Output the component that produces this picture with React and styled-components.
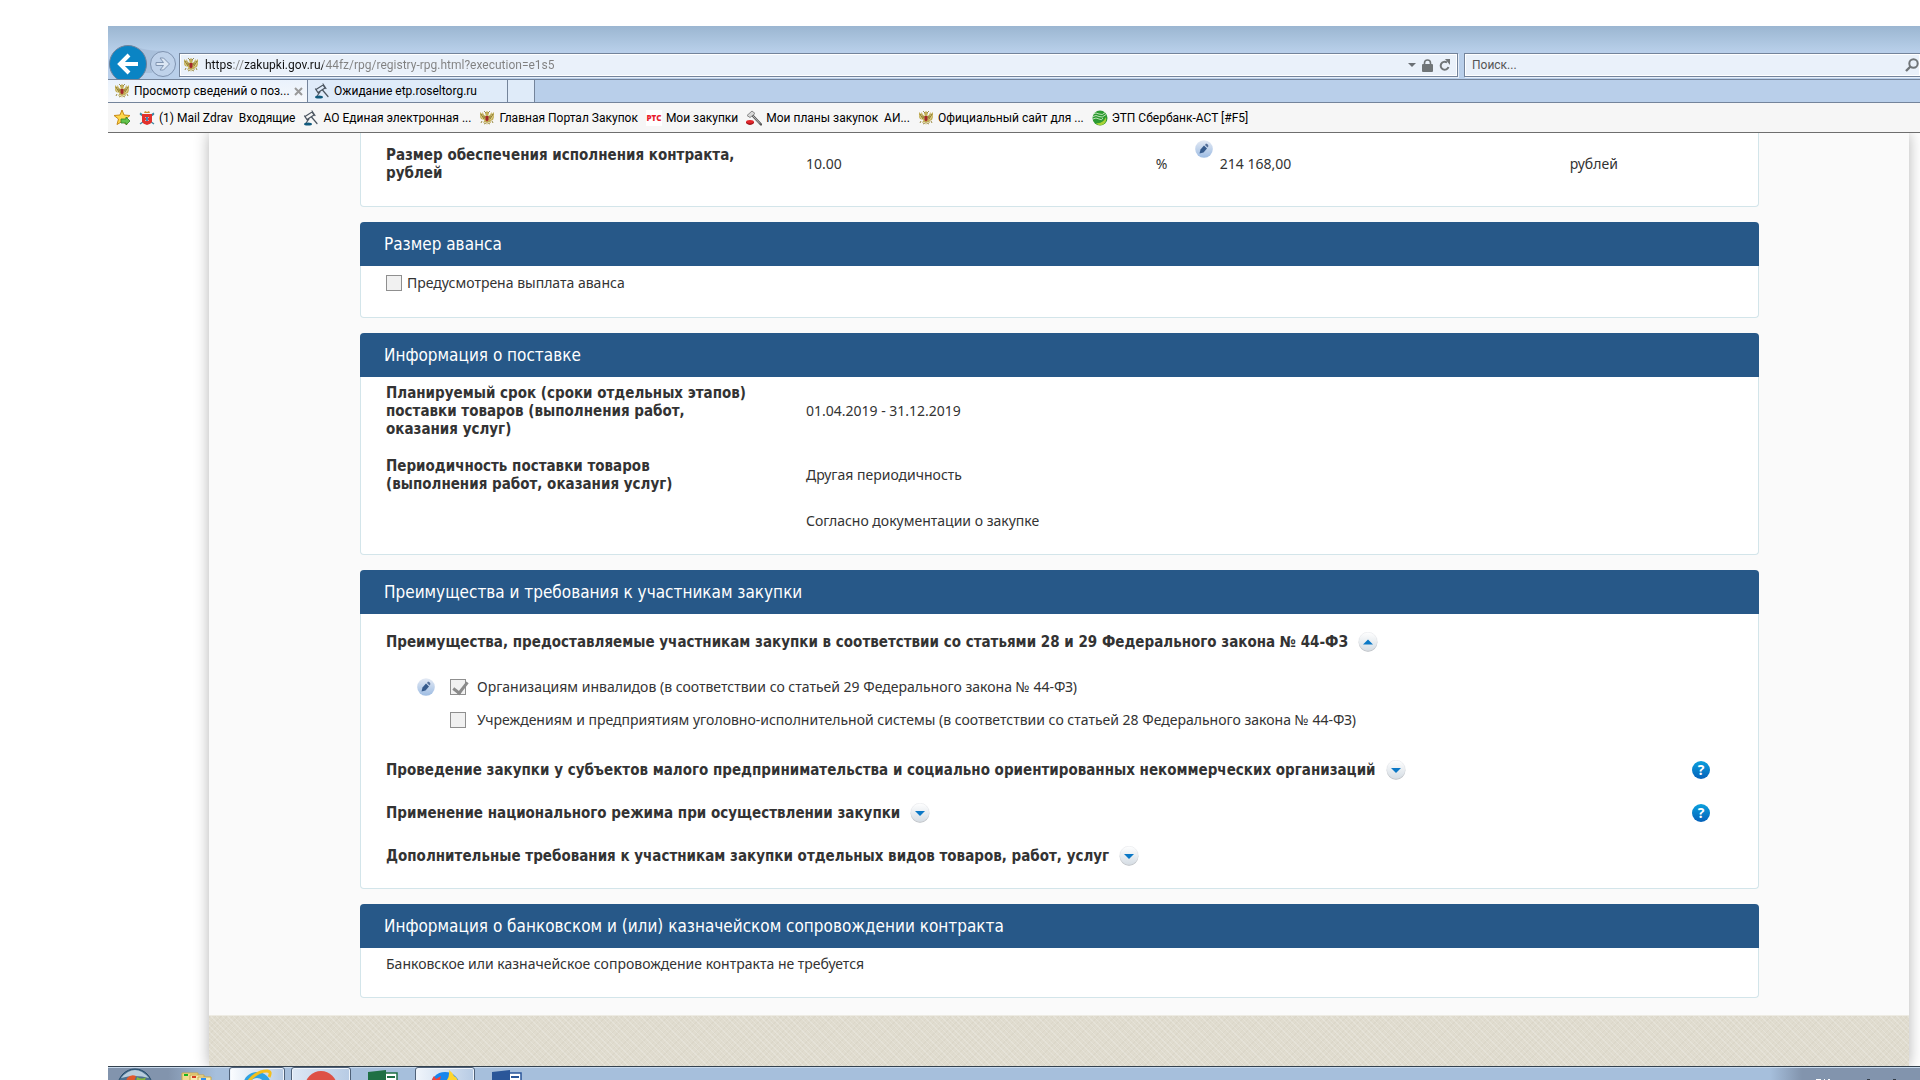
import React from "react";
import styled, { createGlobalStyle } from "styled-components";

const GlobalStyle = createGlobalStyle`
  * {
    box-sizing: border-box;
  }
  body {
    margin: 0;
    background: #fff;
  }
  button, input {
    font: inherit;
  }
`;

const Window = styled.div`
  display: flex;
  flex-direction: column;
  height: 100vh;
  padding: 26px 0 0 108px;
  overflow: hidden;
`;

/* ---------- browser chrome ---------- */

const Chrome = styled.header`
  flex: none;
  color: #000;
  font: 12px/16px Roboto, "Noto Sans", sans-serif;
  background: linear-gradient(#9bb6d1, #b4cce6 22px, #b9cfea 26px);
`;

const NavBar = styled.div`
  display: flex;
  align-items: flex-end;
  height: 53px;
  padding-bottom: 2px;
`;

const NavButtons = styled.div`
  flex: none;
  width: 71px;
  height: 35px;
  margin-bottom: -2px;
  position: relative;

  svg {
    display: block;
  }
`;

const NavHit = styled.button`
  position: absolute;
  top: ${props => (props.$small ? 6 : 0)}px;
  left: ${props => (props.$small ? 41 : 1)}px;
  width: ${props => (props.$small ? 27 : 37)}px;
  height: ${props => (props.$small ? 27 : 35)}px;
  padding: 0;
  border: 0;
  border-radius: 50%;
  background: transparent;
`;

const Field = styled.div`
  display: flex;
  align-items: center;
  gap: 6px;
  flex: ${props => (props.$search ? "0 0 456px" : "1")};
  min-width: 0;
  height: 24px;
  padding: 0 ${props => (props.$search ? 1 : 6)}px 0 ${props => (props.$search ? 7 : 3)}px;
  margin-right: ${props => (props.$search ? 0 : 6)}px;
  border: 1px solid #74849b;
  border-right-width: ${props => (props.$search ? 0 : 1)}px;
  background: #eaf1fa;
  box-shadow: inset 0 0 0 1px #fff, 1px 1px 0 #e6eef9;

  svg {
    flex: none;
  }
`;

const TextInput = styled.input`
  flex: 1;
  min-width: 0;
  height: 20px;
  padding: 0;
  border: 0;
  outline: 0;
  color: #555;
  background: transparent;

  &::placeholder {
    color: #555;
    opacity: 1;
  }
`;

const AddressInput = styled(TextInput)`
  color: transparent;
  background: linear-gradient(90deg, #111 28px, #808080 28px, #808080 40px, #111 40px, #111 118px, #808080 118px);
  background-clip: text;
`;

const Tabs = styled.nav`
  display: flex;
  height: 24px;
  border-top: 1px solid #74849b;
  border-bottom: 1px solid #74849b;
  background: #b9cfea;
`;

const Tab = styled.button`
  display: flex;
  align-items: center;
  gap: 4px;
  width: ${props => (props.$blank ? 27 : 200)}px;
  padding: 0 6px;
  border: 0;
  border-right: 1px solid #74849b;
  text-align: left;
  white-space: nowrap;
  color: #000;
  background: ${props => (props.$active ? "linear-gradient(#eaf2fc, #f6f8fb)" : "#dfebf9")};

  svg {
    flex: none;
  }

  span {
    flex: 1;
  }
`;

const Favorites = styled.nav`
  display: flex;
  align-items: center;
  height: 30px;
  padding-left: 6px;
  border-bottom: 1px solid #6e6e6e;
  background: #f6f6f6;
`;

const Favorite = styled.a`
  display: flex;
  align-items: center;
  gap: 4px;
  margin-left: 8px;
  color: #000;
  text-decoration: none;
  white-space: pre;
`;

/* ---------- page ---------- */

const Viewport = styled.main`
  flex: 1;
  min-height: 0;
  overflow: hidden;
  padding: 0 11px 0 101px;
  background: #fff;
  color: #333;
  font: 14px/18px "Noto Sans", "Open Sans", sans-serif;
`;

const Page = styled.div`
  display: flex;
  flex-direction: column;
  height: 100%;
  background: #fafafa;
  box-shadow: 0 0 14px rgba(0, 0, 0, 0.3);
`;

const Sections = styled.div`
  display: flex;
  flex-direction: column;
  gap: 15px;
  padding: 0 150px 17px 151px;
`;

const Card = styled.section`
  border: 1px solid #d3e5ea;
  border-top: 0;
  border-radius: ${props => (props.$cut ? "0 0 4px 4px" : "4px")};
  background: #fff;
`;

const CardTitle = styled.h2`
  margin: 0 -1px;
  padding: 1px 24px 0;
  border-radius: 4px 4px 0 0;
  color: #fff;
  background: #275888;
  font: 17px/43px "DejaVu Sans Condensed", "DejaVu Sans", sans-serif;
`;

const CardBody = styled.div`
  display: flex;
  flex-direction: column;
  gap: ${props => props.$gap || 0}px;
  padding: ${props => props.$top || 7}px 24px ${props => props.$bottom || 24}px 25px;
`;

const Row = styled.div`
  display: grid;
  grid-template-columns: 419fr 349fr 64fr 349fr 164fr;
  align-items: center;
`;

const RowLabel = styled.div`
  padding-right: 54px;
  font: bold 15px/18px "DejaVu Sans Condensed", "DejaVu Sans", sans-serif;
`;

const Value = styled.div`
  grid-column: ${props => props.$col || "auto"};
`;

const Percent = styled.div`
  display: flex;
  align-self: stretch;
  justify-content: space-between;
  align-items: center;
  padding-right: 7px;
`;

const Lifted = styled.span`
  align-self: flex-start;
  height: 18px;
  margin-top: -6px;

  svg {
    display: block;
  }
`;

const CheckLabel = styled.label`
  display: flex;
  align-items: center;
  gap: ${props => props.$gap || 5}px;
  min-height: 20px;
`;

const Checkbox = styled.input.attrs({ type: "checkbox", disabled: true })`
  appearance: none;
  flex: none;
  display: block;
  width: 16px;
  height: 16px;
  margin: 0;
  border: 1px solid #8f8f8f;
  background: #f1f1f1;

  &:checked::after {
    content: "";
    display: block;
    width: 6px;
    height: 12px;
    margin: -1px 0 0 5px;
    border: solid #8a8a8a;
    border-width: 0 3px 3px 0;
    transform: rotate(38deg);
  }
`;

const CheckList = styled.ul`
  display: flex;
  flex-direction: column;
  gap: 13px;
  margin: 25px 0 30px;
  padding: 0 0 0 31px;
  list-style: none;
`;

const CheckItem = styled.li`
  display: grid;
  grid-template-columns: 18px 1fr;
  gap: 15px;
  align-items: center;
  min-height: 20px;
`;

const Accordion = styled.div`
  display: flex;
  flex-direction: column;
  gap: 23px;
`;

const AccordionRow = styled.div`
  display: flex;
  align-items: center;
  gap: 10px;
  height: 20px;
  padding-right: 24px;
  font: bold 15px/18px "DejaVu Sans Condensed", "DejaVu Sans", sans-serif;
`;

const IconButton = styled.button`
  flex: none;
  display: block;
  padding: 0;
  border: 0;
  margin-left: ${props => (props.$end ? "auto" : 0)};
  background: transparent;

  svg {
    display: block;
  }
`;

const Footer = styled.footer`
  flex: 1;
  border-top: 1px solid #edebe3;
  background:
    repeating-linear-gradient(45deg, rgba(255, 255, 255, 0.2) 0 1px, transparent 1px 4px),
    repeating-linear-gradient(-45deg, rgba(190, 184, 165, 0.15) 0 1px, transparent 1px 4px),
    #e0dccf;
`;

/* ---------- taskbar ---------- */

const TaskBar = styled.footer`
  flex: none;
  display: flex;
  height: 14px;
  overflow: hidden;
  border-top: 1px solid #34424f;
  box-shadow: inset 0 1px 0 #c8d9ec;
  background: linear-gradient(
    90deg,
    #8294ad 60px,
    #a6bfdc 108px,
    #a6bfdc calc(100% - 150px),
    #8294ad calc(100% - 118px)
  );
`;

const Task = styled.button`
  flex: none;
  display: flex;
  align-items: flex-start;
  justify-content: center;
  width: ${props => props.$width}px;
  height: 40px;
  margin-right: ${props => props.$gap || 0}px;
  padding: 1px 0 0;
  border: ${props => (props.$open ? "1px solid #4f6178" : "0")};
  border-radius: 3px;
  background: ${props =>
    props.$open ? `linear-gradient(90deg, ${props.$open}, #b7cbe4)` : "transparent"};
  box-shadow: ${props => (props.$open ? "inset 0 0 0 1px #eef4fb" : "none")};
`;

const Tray = styled.div`
  margin: 12px 20px 0 auto;

  svg {
    display: block;
  }
`;

/* ---------- icons ---------- */

const EagleIcon = () => (
  <svg width="16" height="16" viewBox="0 0 16 16">
    <path d="M1 2l2 2 .5-2L5 5l2 1-1-3 2-2 2 2-1 3 2-1 1.500-3 .5 2 2-2v5l-1 3-2.500 1L12 13l-3-1-1 3-1-3-3 1 1.500-3L2 9 1 7z" fill="#c2ae58" />
    <path d="M2 4l3 5M3.500 4L6 8M14 4l-3 5M12.500 4L10 8M5 1l2 2M11 1L9 3" stroke="#84752f" strokeWidth=".8" fill="none" />
    <path d="M1.500 5.500l3 4.500M14.500 5.500l-3 4.500M4 3v3M12 3v3" stroke="#e9dca0" strokeWidth=".7" fill="none" />
    <path d="M6.500 6h3v4L8 11.500 6.500 10z" fill="#a3262b" />
    <path d="M3 11l-1 2M13 11l1 2M5 14l2-1M11 14l-2-1" stroke="#9b8b45" fill="none" />
  </svg>
);

const GavelIcon = () => (
  <svg width="16" height="16" viewBox="0 0 16 16">
    <path d="M2 6.500L9 2l2 3-7 4.500zM9 1l3 4.500M1.500 6l3 4.500M8.500 7L14 13.500M6 9l-3 4" fill="none" stroke="#4b5560" strokeWidth="1.200" strokeLinecap="round" />
    <ellipse cx="5" cy="14" rx="4" ry="1.600" fill="#115a7d" />
  </svg>
);

const RedGavelIcon = () => (
  <svg width="16" height="16" viewBox="0 0 16 16">
    <path d="M7 6l8 8.500" stroke="#555" strokeWidth="2.400" strokeLinecap="round" />
    <path d="M7 6l7 7.500" stroke="#bbb" strokeWidth="1" />
    <path d="M1 5.500L6 1l3 2.500-5 4z" fill="#d8d8d8" stroke="#888" />
    <ellipse cx="4" cy="12" rx="4" ry="2" fill="#e3262b" />
    <path d="M0 12q4 3 8 0v1q-4 4-8 0z" fill="#9d1116" />
  </svg>
);

const StarIcon = () => (
  <svg width="17" height="17" viewBox="0 0 17 17">
    <path d="M8 1l2 5 6 .5-4.500 3.500 1.500 5.500-5-3-5 3 1.500-5.500L0 6.500 6 6z" fill="#ffd84a" stroke="#c88a17" strokeLinejoin="round" />
    <path d="M7 10h5V8l4 4-4 4v-2H7z" fill="#63c34b" stroke="#2f8426" strokeWidth=".8" />
  </svg>
);

const CrestIcon = () => (
  <svg width="16" height="16" viewBox="0 0 16 16">
    <path d="M1 3l3 2M15 3l-3 2M1 14L15 4M15 14L1 4" stroke="#3f8aa5" strokeWidth="1.400" />
    <path d="M5 3l1-2 2 1 2-1 1 2z" fill="#c9922c" />
    <path d="M3 4h10v8q-1 2-5 3-4-1-5-3z" fill="#e2322c" />
    <path d="M6 7l4 4M10 7l-4 4" stroke="#e9a6a3" strokeWidth="1" />
    <path d="M7 7h2v4H7z" fill="#4a83b5" />
  </svg>
);

const RtsIcon = () => (
  <svg width="16" height="16" viewBox="0 0 16 16">
    <rect width="16" height="16" fill="#fff" />
    <text x="8" y="11" textAnchor="middle" fontSize="8" fontWeight="800" fontFamily="Open Sans, sans-serif" fill="#e8202e">
      РТС
    </text>
  </svg>
);

const SberIcon = () => (
  <svg width="16" height="16" viewBox="0 0 16 16">
    <circle cx="8" cy="8" r="7.500" fill="#2c9a31" />
    <path d="M4 13q7 1 10-6 1 6-4 8-4 1-6-2z" fill="#a8d236" />
    <path d="M1 4q3-2 6 0t7-2M1 6.500q3-2 6 0t7-2M1 9q3-2 6 0t4-1" fill="none" stroke="#dff2d6" strokeWidth=".8" />
  </svg>
);

const NavIcon = () => (
  <svg width="71" height="35" viewBox="0 0 71 35">
    <path d="M28 3Q40 7 55 7L44 29H28z" fill="#a3b9d4" opacity=".7" />
    <circle cx="20" cy="20" r="18.500" fill="#0a84c4" stroke="#71839b" />
    <path d="M12 20h18M21 11l-9 9 9 9" fill="none" stroke="#fff" strokeWidth="4" />
    <circle cx="55" cy="20" r="12.500" fill="#bfd2ea" stroke="#7f93b0" />
    <path d="M48 18.500h7.500L52 14h3.500l6 6-6 6H52l3.500-4.500H48z" fill="#dce7f4" stroke="#8296b2" />
  </svg>
);

const CaretIcon = () => (
  <svg width="8" height="5" viewBox="0 0 8 5">
    <path d="M0 0h8L4 4z" fill="#6b7075" />
  </svg>
);

const LockIcon = () => (
  <svg width="11" height="13" viewBox="0 0 11 13">
    <path d="M2.500 6V4a3 3 0 0 1 6 0v2" fill="none" stroke="#707578" strokeWidth="1.600" />
    <rect x="0" y="5" width="11" height="8" rx="1" fill="#707578" />
  </svg>
);

const ReloadIcon = () => (
  <svg width="12" height="13" viewBox="0 0 12 13">
    <path d="M8 3.500A4 4 0 1 0 9.500 8" fill="none" stroke="#707578" strokeWidth="2" />
    <path d="M6 0l5 0v6z" fill="#707578" />
  </svg>
);

const SearchIcon = () => (
  <svg width="14" height="14" viewBox="0 0 14 14">
    <circle cx="8.500" cy="5.500" r="4.200" fill="none" stroke="#707578" strokeWidth="2" />
    <path d="M5.500 8.500L1 13" stroke="#707578" strokeWidth="2.400" />
  </svg>
);

const CloseIcon = () => (
  <svg width="9" height="9" viewBox="0 0 9 9">
    <path d="M1 1l7 7M8 1L1 8" stroke="#999" strokeWidth="2" />
  </svg>
);

const PencilIcon = () => (
  <svg width="18" height="18" viewBox="0 0 18 18">
    <defs>
      <linearGradient id="pencil" x1="0" y1="0" x2="0" y2="1">
        <stop offset="0" stopColor="#e4eaf4" />
        <stop offset="1" stopColor="#9dbce3" />
      </linearGradient>
    </defs>
    <circle cx="9" cy="9" r="8.800" fill="url(#pencil)" />
    <path d="M4.500 13.500l1-4L9 5.500l3 3-3.500 4z" fill="#355a8c" />
    <path d="M10 5l1-1.500q2 0 2.500 2.500L12.500 7.500z" fill="#55719b" />
  </svg>
);

const ToggleIcon = ({ open }) => (
  <svg width="20" height="20" viewBox="0 0 20 20">
    <defs>
      <linearGradient id="toggle" x1="0" y1="0" x2="0" y2="1">
        <stop offset="0" stopColor="#fff" />
        <stop offset="1" stopColor="#d5dde4" />
      </linearGradient>
    </defs>
    <circle cx="10" cy="10.500" r="9.300" fill="#b4b9be" />
    <circle cx="10" cy="9.500" r="9.300" fill="url(#toggle)" stroke="#e0e3e6" strokeWidth=".5" />
    <path d={open ? "M5 12.500h10l-5-5z" : "M5 8h10l-5 5z"} fill="#0b78c6" />
  </svg>
);

const HelpIcon = () => (
  <svg width="18" height="18" viewBox="0 0 18 18">
    <defs>
      <linearGradient id="help" x1="0" y1="0" x2="0" y2="1">
        <stop offset="0" stopColor="#0ba0dd" />
        <stop offset="1" stopColor="#0561ba" />
      </linearGradient>
    </defs>
    <circle cx="9" cy="9" r="9" fill="url(#help)" />
    <text x="9" y="14" textAnchor="middle" fontSize="14" fontWeight="bold" fontFamily="Open Sans, sans-serif" fill="#fff">
      ?
    </text>
  </svg>
);

const StartIcon = () => (
  <svg width="36" height="38" viewBox="0 0 36 38">
    <circle cx="18" cy="18" r="17" fill="#4d7190" stroke="#234a68" />
    <path d="M4 10q14-16 28 0-14-4-28 0z" fill="#b9cddd" />
    <path d="M10 10q4-4 9-2l-3 9H8z" fill="#e2572a" />
    <path d="M20 9q5 3 9 0l-3 9h-8z" fill="#86b93c" />
  </svg>
);

const FolderIcon = () => (
  <svg width="32" height="30" viewBox="0 0 32 30">
    <path d="M2 5h16v25H2z" fill="#f2dc8e" stroke="#c9a94c" />
    <path d="M10 7h14v22H10z" fill="#f8eab0" stroke="#c9a94c" />
    <path d="M18 9h13v20H18z" fill="#f8eab0" stroke="#c9a94c" />
    <path d="M4 6h4v2H4z" fill="#19b51e" />
    <path d="M12 8h4v2h-4z" fill="#d63c22" />
    <path d="M21 10h5v2h-5z" fill="#2d8ff0" />
  </svg>
);

const IEIcon = () => (
  <svg width="36" height="34" viewBox="0 0 36 34">
    <circle cx="18" cy="17" r="11" fill="none" stroke="#2ea3e3" strokeWidth="6" />
    <path d="M12 17h16" stroke="#2ea3e3" strokeWidth="4" />
    <path d="M7 16Q16 2 28 2q5 0 2 6" fill="none" stroke="#f4bf1c" strokeWidth="3" />
  </svg>
);

const ChromeIcon = () => (
  <svg width="34" height="36" viewBox="0 0 34 36">
    <circle cx="17" cy="18" r="16" fill="#de5145" />
    <path d="M5 12l8 12-7 7Q-2 20 5 12z" fill="#2a9d58" />
    <circle cx="17" cy="19" r="7.500" fill="#fff" />
  </svg>
);

const FirefoxIcon = () => (
  <svg width="34" height="36" viewBox="0 0 34 36">
    <circle cx="17" cy="18" r="15" fill="#1786ee" />
    <path d="M3 18q0-7 3-11l2 3 5-3-1 4q5 0 5 3l-4 8-8 6z" fill="#f2423a" />
    <path d="M21 1q4 3 5 6 5 2 5 12l-7 6-7-12q5-4 4-12z" fill="#ffd52e" />
  </svg>
);

const OfficeIcon = ({ color }) => (
  <svg width="32" height="34" viewBox="0 0 32 34">
    <path d="M17 5h13v26H17z" fill="#fff" stroke={color} strokeWidth="1.500" />
    <path d="M20 9h8M20 13h8" stroke={color} strokeWidth="2" />
    <path d="M1 4l18-2v32L1 31z" fill={color} />
  </svg>
);

/* ---------- data ---------- */

const favorites = [
  { icon: <CrestIcon />, text: "(1) Mail Zdrav  Входящие" },
  { icon: <GavelIcon />, text: "АО Единая электронная ..." },
  { icon: <EagleIcon />, text: "Главная Портал Закупок" },
  { icon: <RtsIcon />, text: "Мои закупки" },
  { icon: <RedGavelIcon />, text: "Мои планы закупок  АИ..." },
  { icon: <EagleIcon />, text: "Официальный сайт для ..." },
  { icon: <SberIcon />, text: "ЭТП Сбербанк-АСТ [#F5]" }
];

const requirements = [
  {
    text: "Проведение закупки у субъектов малого предпринимательства и социально ориентированных некоммерческих организаций",
    help: true
  },
  { text: "Применение национального режима при осуществлении закупки", help: true },
  { text: "Дополнительные требования к участникам закупки отдельных видов товаров, работ, услуг" }
];

const BrowserChrome = () => (
  <Chrome>
    <NavBar>
      <NavButtons>
        <NavIcon />
        <NavHit aria-label="Назад" />
        <NavHit $small aria-label="Вперед" />
      </NavButtons>
      <Field>
        <EagleIcon />
        <AddressInput
          aria-label="Адрес"
          defaultValue="https://zakupki.gov.ru/44fz/rpg/registry-rpg.html?execution=e1s5"
        />
        <CaretIcon />
        <LockIcon />
        <ReloadIcon />
      </Field>
      <Field $search>
        <TextInput aria-label="Поиск" placeholder="Поиск..." />
        <SearchIcon />
      </Field>
    </NavBar>
    <Tabs>
      <Tab $active>
        <EagleIcon />
        <span>Просмотр сведений о поз...</span>
        <CloseIcon />
      </Tab>
      <Tab>
        <GavelIcon />
        <span>Ожидание etp.roseltorg.ru</span>
      </Tab>
      <Tab $blank aria-label="Новая вкладка" />
    </Tabs>
    <Favorites>
      <StarIcon />
      {favorites.map(item => (
        <Favorite href="#" key={item.text}>
          {item.icon}
          {item.text}
        </Favorite>
      ))}
    </Favorites>
  </Chrome>
);

const Toggle = ({ open }) => (
  <IconButton aria-expanded={!!open} aria-label={open ? "Свернуть" : "Развернуть"}>
    <ToggleIcon open={open} />
  </IconButton>
);

const App = () => (
  <Window>
    <GlobalStyle />
    <BrowserChrome />
    <Viewport>
      <Page>
        <Sections>
          <Card $cut>
            <CardBody $top={13}>
              <Row>
                <RowLabel>Размер обеспечения исполнения контракта, рублей</RowLabel>
                <Value>10.00</Value>
                <Percent>
                  %
                  <Lifted>
                    <PencilIcon />
                  </Lifted>
                </Percent>
                <Value>214 168,00</Value>
                <Value>рублей</Value>
              </Row>
            </CardBody>
          </Card>

          <Card>
            <CardTitle>Размер аванса</CardTitle>
            <CardBody>
              <CheckLabel>
                <Checkbox />
                Предусмотрена выплата аванса
              </CheckLabel>
            </CardBody>
          </Card>

          <Card>
            <CardTitle>Информация о поставке</CardTitle>
            <CardBody $gap={19}>
              <Row>
                <RowLabel>
                  Планируемый срок (сроки отдельных этапов) поставки товаров (выполнения работ, оказания услуг)
                </RowLabel>
                <Value>01.04.2019 - 31.12.2019</Value>
              </Row>
              <Row>
                <RowLabel>Периодичность поставки товаров (выполнения работ, оказания услуг)</RowLabel>
                <Value>Другая периодичность</Value>
              </Row>
              <Row>
                <Value $col="2 / 5">Согласно документации о закупке</Value>
              </Row>
            </CardBody>
          </Card>

          <Card>
            <CardTitle>Преимущества и требования к участникам закупки</CardTitle>
            <CardBody $top={18} $bottom={22}>
              <AccordionRow>
                Преимущества, предоставляемые участникам закупки в соответствии со статьями 28 и 29 Федерального
                закона № 44-ФЗ
                <Toggle open />
              </AccordionRow>
              <CheckList>
                <CheckItem>
                  <PencilIcon />
                  <CheckLabel $gap={11}>
                    <Checkbox defaultChecked />
                    Организациям инвалидов (в соответствии со статьей 29 Федерального закона № 44-ФЗ)
                  </CheckLabel>
                </CheckItem>
                <CheckItem>
                  <span />
                  <CheckLabel $gap={11}>
                    <Checkbox />
                    Учреждениям и предприятиям уголовно-исполнительной системы (в соответствии со статьей 28
                    Федерального закона № 44-ФЗ)
                  </CheckLabel>
                </CheckItem>
              </CheckList>
              <Accordion>
                {requirements.map(item => (
                  <AccordionRow key={item.text}>
                    {item.text}
                    <Toggle />
                    {item.help && (
                      <IconButton $end aria-label="Справка">
                        <HelpIcon />
                      </IconButton>
                    )}
                  </AccordionRow>
                ))}
              </Accordion>
            </CardBody>
          </Card>

          <Card>
            <CardTitle>Информация о банковском и (или) казначейском сопровождении контракта</CardTitle>
            <CardBody>Банковское или казначейское сопровождение контракта не требуется</CardBody>
          </Card>
        </Sections>
        <Footer />
      </Page>
    </Viewport>
    <TaskBar>
      <Task $width={54} $gap={16} aria-label="Пуск">
        <StartIcon />
      </Task>
      <Task $width={36} $gap={15} aria-label="Проводник">
        <FolderIcon />
      </Task>
      <Task $width={56} $gap={6} $open="#fbfdff" aria-label="Internet Explorer">
        <IEIcon />
      </Task>
      <Task $width={60} $open="#dde8f5" aria-label="Chrome">
        <ChromeIcon />
      </Task>
      <Task $width={64} aria-label="Excel">
        <OfficeIcon color="#1f7044" />
      </Task>
      <Task $width={60} $open="#f0f5fb" aria-label="Firefox">
        <FirefoxIcon />
      </Task>
      <Task $width={64} aria-label="Word">
        <OfficeIcon color="#2a5699" />
      </Task>
      <Tray>
        <svg width="84" height="2" viewBox="0 0 84 2">
          <path d="M0 0h5v2H0zM8 0h1v2H8zM12 0h2v2h-2z" fill="#fff" />
          <path d="M51 0h3v2h-3zM77 0h3v2h-3z" fill="#333c48" />
        </svg>
      </Tray>
    </TaskBar>
  </Window>
);

export default App;
